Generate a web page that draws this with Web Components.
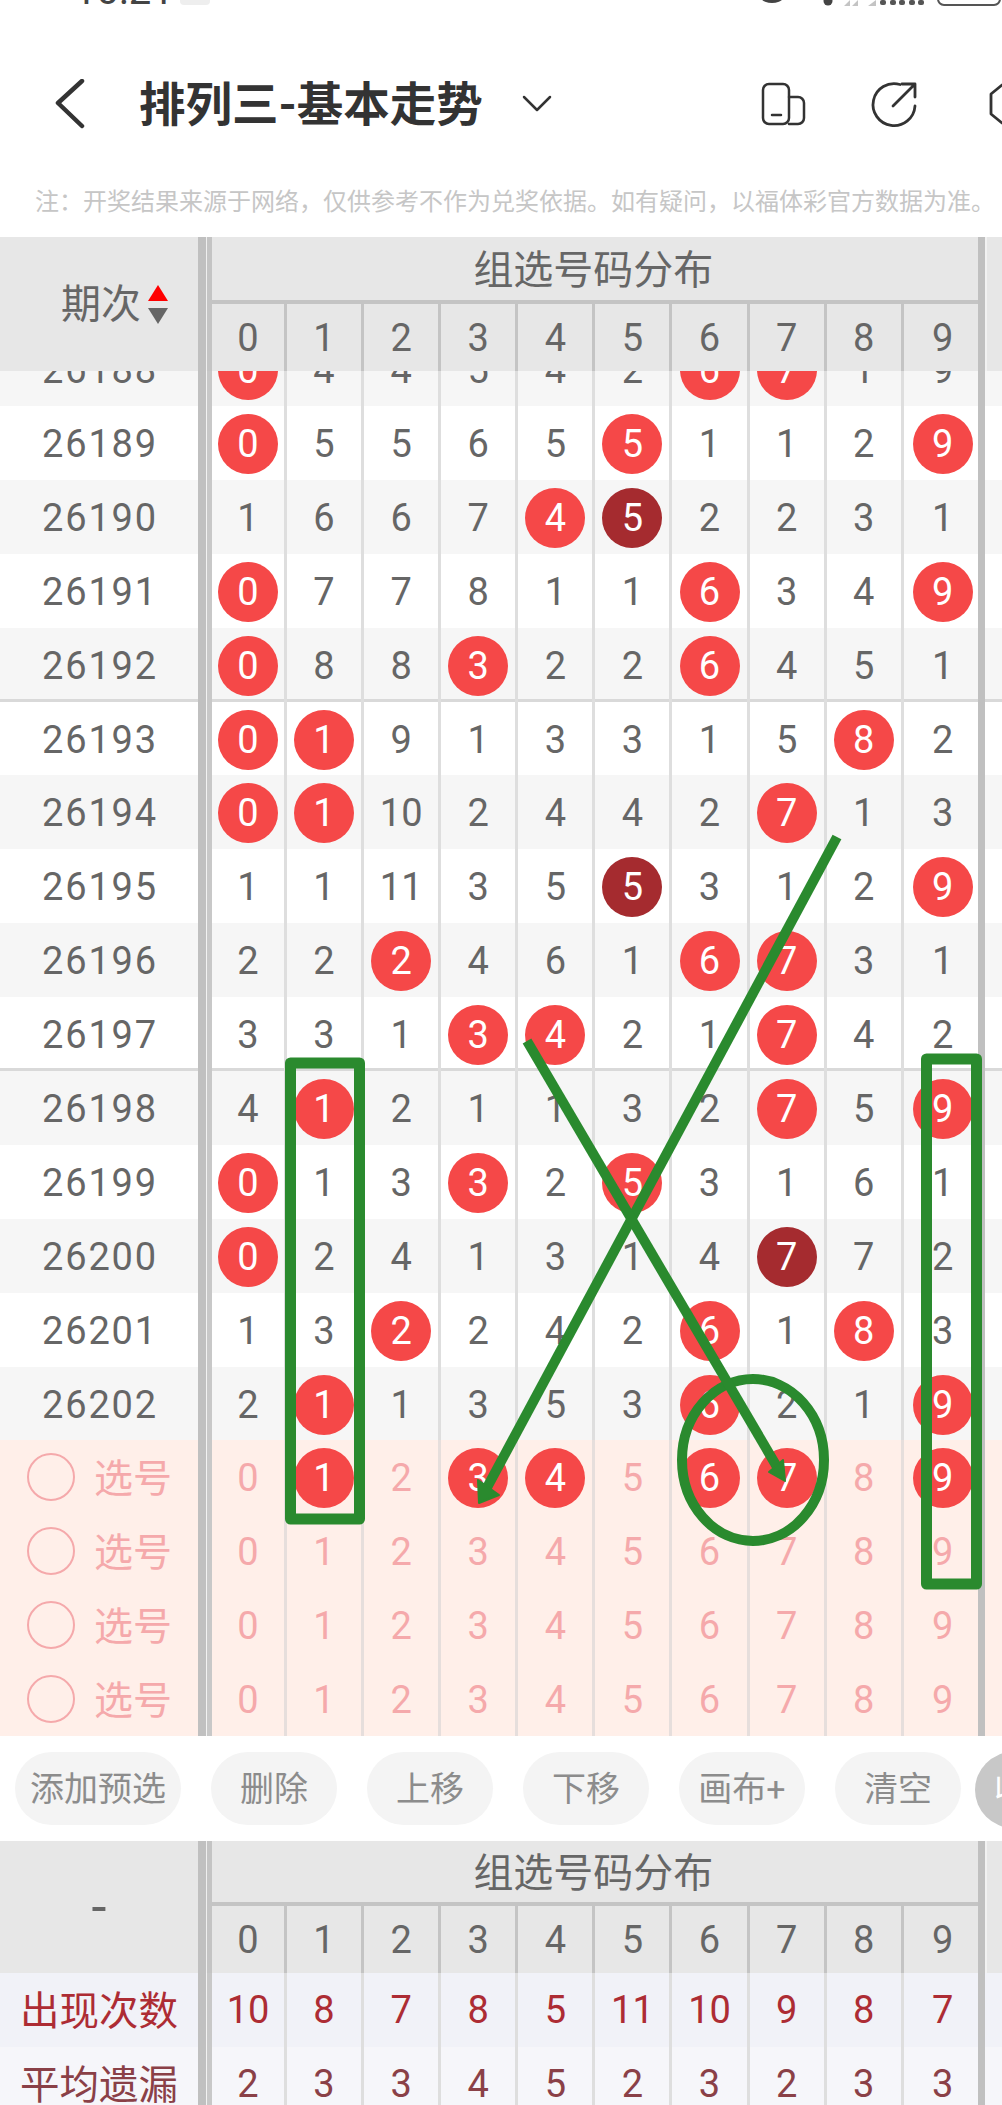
<!DOCTYPE html>
<html lang="zh">
<head>
<meta charset="utf-8">
<title>排列三-基本走势</title>
<style>
  html, body { margin: 0; padding: 0; background: #fff; }
  body {
    position: relative;
    width: 1002px;
    height: 2105px;
    overflow: hidden;
    font-family: Roboto, "Noto Sans CJK SC", sans-serif;
    color: #666;
    --cols: 198px 14px 75px repeat(8, 77.1px) 74px 7px 1fr;
  }
</style>
</head>
<body>
  <status-strip></status-strip>
  <title-bar>排列三-基本走势</title-bar>
  <notice-line>注：开奖结果来源于网络，仅供参考不作为兑奖依据。如有疑问，以福体彩官方数据为准。</notice-line>

  <trend-head group-h="67px">
    <sort-label slot="corner">期次</sort-label>
    组选号码分布
  </trend-head>

  <row-window>
    <draw-row alt values="0* 4 4 5 4 2 6* 7* 1 9">26188</draw-row>
    <draw-row values="0* 5 5 6 5 5* 1 1 2 9*">26189</draw-row>
    <draw-row alt values="1 6 6 7 4* 5! 2 2 3 1">26190</draw-row>
    <draw-row values="0* 7 7 8 1 1 6* 3 4 9*">26191</draw-row>
    <draw-row alt sep values="0* 8 8 3* 2 2 6* 4 5 1">26192</draw-row>
    <draw-row values="0* 1* 9 1 3 3 1 5 8* 2">26193</draw-row>
    <draw-row alt values="0* 1* 10 2 4 4 2 7* 1 3">26194</draw-row>
    <draw-row values="1 1 11 3 5 5! 3 1 2 9*">26195</draw-row>
    <draw-row alt values="2 2 2* 4 6 1 6* 7* 3 1">26196</draw-row>
    <draw-row sep values="3 3 1 3* 4* 2 1 7* 4 2">26197</draw-row>
    <draw-row alt values="4 1* 2 1 1 3 2 7* 5 9*">26198</draw-row>
    <draw-row values="0* 1 3 3* 2 5* 3 1 6 1">26199</draw-row>
    <draw-row alt values="0* 2 4 1 3 1 4 7! 7 2">26200</draw-row>
    <draw-row values="1 3 2* 2 4 2 6* 1 8* 3">26201</draw-row>
    <draw-row alt values="2 1* 1 3 5 3 6* 2 1 9*">26202</draw-row>
    <draw-row pick values="0 1* 2 3* 4* 5 6* 7* 8 9*"><pick-label>选号</pick-label></draw-row>
    <draw-row pick values="0 1 2 3 4 5 6 7 8 9"><pick-label>选号</pick-label></draw-row>
    <draw-row pick values="0 1 2 3 4 5 6 7 8 9"><pick-label>选号</pick-label></draw-row>
    <draw-row pick values="0 1 2 3 4 5 6 7 8 9"><pick-label>选号</pick-label></draw-row>
  </row-window>

  <tool-bar>
    <tool-chip>添加预选</tool-chip>
    <tool-chip>删除</tool-chip>
    <tool-chip>上移</tool-chip>
    <tool-chip>下移</tool-chip>
    <tool-chip>画布+</tool-chip>
    <tool-chip>清空</tool-chip>
    <tool-chip dark>收起</tool-chip>
  </tool-bar>

  <trend-head group-h="65px">
    <span slot="corner" style="font-size:54px;line-height:54px">-</span>
    组选号码分布
  </trend-head>
  <draw-row stat style="--ink:#ad2c34; --row-bg:#f1f2f8" values="10 8 7 8 5 11 10 9 8 7">出现次数</draw-row>
  <draw-row stat style="--ink:#8a4047; --row-bg:#f6f6fa" values="2 3 3 4 5 2 3 2 3 3">平均遗漏</draw-row>

  <ink-layer></ink-layer>

<script>
class StatusStrip extends HTMLElement {
  constructor() {
    super();
    this.attachShadow({ mode: "open" });
    this.shadowRoot.innerHTML = `
      <style>
        :host { display: flex; height: 44px; overflow: hidden; align-items: flex-start; }
        .time { margin: -29px 0 0 74px; font-size: 40px; line-height: 40px; color: #444; width: 106px; }
        .pill { width: 30px; height: 5px; background: #eee; border-radius: 0 0 4px 4px; }
        svg { margin-left: auto; }
      </style>
      <span class="time">10:21</span>
      <span class="pill"></span>
      <svg width="242" height="10" viewBox="0 0 242 10">
        <circle cx="12" cy="-15" r="18" fill="#444"/>
        <circle cx="68" cy="1" r="4.5" fill="#444"/>
        <path d="M84 6 L90 0 V6Z M92 6 L98 0 V6Z M108 6 L116 0 V6Z" fill="#c4c4c4"/>
        <g fill="#555">
          <rect x="120" y="0" width="6" height="5" rx="2"/>
          <rect x="130" y="0" width="6" height="5" rx="2"/>
          <rect x="139" y="0" width="6" height="5" rx="2"/>
          <rect x="149" y="0" width="6" height="5" rx="2"/>
          <rect x="158" y="0" width="6" height="5" rx="2"/>
        </g>
        <rect x="178" y="-20" width="62" height="25" rx="6" fill="none" stroke="#555" stroke-width="2"/>
      </svg>
    `;
  }
}

class TitleBar extends HTMLElement {
  constructor() {
    super();
    this.attachShadow({ mode: "open" });
    this.shadowRoot.innerHTML = `
      <style>
        :host { display: flex; align-items: center; height: 120px; overflow: hidden; color: #333; }
        .back { margin-left: 55px; flex: none; }
        .title { margin: -7px 0 0 54px; font-size: 46.5px; font-weight: 700; white-space: nowrap; width: 343px; }
        .down { margin-left: 40px; flex: none; }
        .tools { margin-left: auto; width: 242px; display: flex; flex: none; gap: 62px; }
        .tools svg { flex: none; }
        .tools svg:last-child { margin-left: 8px; }
        svg * { fill: none; stroke: #333; stroke-linecap: round; stroke-linejoin: round; }
      </style>
      <svg class="back" width="30" height="50" viewBox="0 0 30 50"><path d="M27 2 L3 24 L27 47" stroke-width="4.5"/></svg>
      <div class="title"><slot></slot></div>
      <svg class="down" width="30" height="20" viewBox="0 0 30 20"><path d="M2 3 L15 16 L28 3" stroke-width="2.5"/></svg>
      <div class="tools">
        <svg width="48" height="50" viewBox="0 0 48 50">
          <rect x="3" y="5" width="26" height="40" rx="6" stroke-width="2.5"/>
          <path d="M29 18 h9 a6 6 0 0 1 6 6 v15 a6 6 0 0 1 -6 6 h-9" stroke-width="2.5"/>
          <path d="M12 36 h9" stroke-width="2.5"/>
        </svg>
        <svg width="48" height="50" viewBox="0 0 48 50">
          <path d="M30 5.5 A21 21 0 1 0 45 27" stroke-width="2.8"/>
          <path d="M23 27 L45 5 M32 5 H45 V18" stroke-width="2.8"/>
        </svg>
        <svg width="14" height="50" viewBox="0 0 14 50"><path d="M14 6 L3 15 V35 L14 44" stroke-width="2.8"/></svg>
      </div>
    `;
  }
}

class NoticeLine extends HTMLElement {
  constructor() {
    super();
    this.attachShadow({ mode: "open" });
    this.shadowRoot.innerHTML = `
      <style>
        :host { display: block; height: 70px; padding: 3px 0 0 35px; box-sizing: content-box; line-height: 70px;
                font-size: 24px; color: #c6c6c6; white-space: nowrap; overflow: hidden; }
      </style>
      <slot></slot>
    `;
  }
}

class SortLabel extends HTMLElement {
  constructor() {
    super();
    this.attachShadow({ mode: "open" });
    this.shadowRoot.innerHTML = `
      <style>
        :host { display: flex; align-items: center; gap: 7px; margin-left: 61px; font-size: 40px; }
        .txt { margin-top: -7px; }
        .arrows { display: flex; flex-direction: column; gap: 7px; }
        .up, .dn { width: 0; height: 0; border-left: 10px solid transparent; border-right: 10px solid transparent; }
        .up { border-bottom: 16px solid #f00; }
        .dn { border-top: 16px solid #666; }
      </style>
      <span class="txt"><slot></slot></span>
      <div class="arrows"><div class="up"></div><div class="dn"></div></div>
    `;
  }
}

class TrendHead extends HTMLElement {
  connectedCallback() {
    if (this.shadowRoot) return;
    this.attachShadow({ mode: "open" });
    const digits = [...Array(10).keys()]
      .map((n) => `<div class="num${n === 9 ? " last" : ""}">${n}</div>`)
      .join("");
    this.shadowRoot.innerHTML = `
      <style>
        :host {
          display: grid;
          grid-template-columns: var(--cols);
          grid-template-rows: ${this.getAttribute("group-h")} 67px;
          background: #e7e7e7;
          color: #666;
          font-size: 38px;
        }
        .corner { grid-row: 1 / 3; grid-column: 1; display: flex; align-items: center; justify-content: center; }
        .corner.left { justify-content: flex-start; }
        .gutter { grid-row: 1 / 3; grid-column: 2; background: linear-gradient(to right, #c0c0c0 0 8px, #efefef 8px 9px, #c4c4c4 9px 14px); }
        .group { grid-row: 1; grid-column: 3 / span 10; display: flex; align-items: center; justify-content: center;
                 font-size: 40px; border-bottom: 4px solid #c4c4c4; box-sizing: border-box; padding: 0 3px 3px 0; }
        .bar { grid-row: 1 / 3; grid-column: 13; background: #c0c0c0; }
        .tail { grid-row: 1 / 3; grid-column: 14; border-left: 2px solid #f2f2f2; }
        .num { grid-row: 2; display: flex; align-items: center; justify-content: center; border-right: 3px solid #c4c4c4; }
        .num.last { border-right: 0; padding-left: 4px; }
      </style>
      <div class="corner"><slot name="corner"></slot></div>
      <div class="gutter"></div>
      <div class="group"><slot></slot></div>
      <div class="bar"></div>
      <div class="tail"></div>
      ${digits}
    `;
    this.shadowRoot.querySelectorAll(".num").forEach((cell, i) => {
      cell.style.gridColumn = String(i + 3);
    });
    if (this.querySelector("sort-label")) {
      this.shadowRoot.querySelector(".corner").classList.add("left");
    }
  }
}

class RowWindow extends HTMLElement {
  constructor() {
    super();
    this.attachShadow({ mode: "open" });
    // the list is scrolled: the top row is half hidden under the sticky head
    this.shadowRoot.innerHTML = `
      <style>
        :host { display: block; height: 1365px; overflow: hidden; }
        .list { margin-top: -38.9px; }
      </style>
      <div class="list"><slot></slot></div>
    `;
  }
}

class DrawRow extends HTMLElement {
  connectedCallback() {
    if (this.shadowRoot) return;
    this.attachShadow({ mode: "open" });
    const cells = this.getAttribute("values").split(" ").map((v, i) => {
      const kind = v.endsWith("*") ? "ball" : v.endsWith("!") ? "ball dark" : "";
      const txt = v.replace(/[*!]/, "");
      const inner = kind ? `<span class="${kind}">${txt}</span>` : txt;
      return `<div class="cell${i === 9 ? " last" : ""}">${inner}</div>`;
    }).join("");
    this.shadowRoot.innerHTML = `
      <style>
        :host {
          display: grid;
          grid-template-columns: var(--cols);
          height: 73.9px;
          background: var(--row-bg, #fff);
          color: var(--ink, #666);
          font-size: 38px;
        }
        :host([alt]) { background: #f6f6f6; }
        :host([sep]) { box-shadow: inset 0 -3px #d9d9d9; }
        :host([pick]) { background: #ffefe9; color: #f5a9ab; --line: #e6dedc; }
        .label { display: flex; align-items: center; justify-content: center; letter-spacing: 1.8px; white-space: nowrap; padding: 2px 0 0 2px; }
        :host([pick]) .label { letter-spacing: 0; font-size: 39px; padding: 0; }
        :host([stat]) .label { letter-spacing: 0; font-size: 39.5px; padding: 0 0 5px; }
        .gutter { background: linear-gradient(to right, #c0c0c0 0 8px, #f2f2f2 8px 9px, #c8c8c8 9px 14px); }
        .cell { display: flex; align-items: center; justify-content: center; border-right: 3px solid var(--line, #dedede); padding-top: 2px; box-sizing: border-box; }
        :host([stat]) .cell { padding-top: 0; }
        .cell.last { border-right: 0; padding-left: 4px; }
        .bar { background: #c0c0c0; }
        .ball { display: flex; align-items: center; justify-content: center; width: 60px; height: 60px; border-radius: 50%;
                background: #f54848; color: #fff; flex: none; }
        .ball.dark { background: #a52b2f; }
      </style>
      <div class="label"><slot></slot></div>
      <div class="gutter"></div>
      ${cells}
      <div class="bar"></div>
      <div class="tail"></div>
    `;
  }
}

class PickLabel extends HTMLElement {
  constructor() {
    super();
    this.attachShadow({ mode: "open" });
    this.shadowRoot.innerHTML = `
      <style>
        :host { display: flex; align-items: center; gap: 19px; width: 147px; margin-left: 3px; }
        .ring { width: 48px; height: 48px; box-sizing: border-box; border: 2.5px solid #f5a9ab; border-radius: 50%; flex: none; }
        .txt { margin-top: -5px; }
      </style>
      <div class="ring"></div><span class="txt"><slot></slot></span>
    `;
  }
}

class ToolBar extends HTMLElement {
  constructor() {
    super();
    this.attachShadow({ mode: "open" });
    this.shadowRoot.innerHTML = `
      <style>
        :host { display: flex; gap: 30px; height: 105px; box-sizing: border-box; padding: 16px 0 0 15px; overflow: hidden; background: #fff; }
      </style>
      <slot></slot>
    `;
  }
}

class ToolChip extends HTMLElement {
  constructor() {
    super();
    this.attachShadow({ mode: "open" });
    this.shadowRoot.innerHTML = `
      <style>
        :host { display: flex; flex: none; align-items: center; justify-content: center; box-sizing: border-box;
                min-width: 126px; height: 73px; padding: 0 15px 5px; border-radius: 37px; background: #f4f4f4;
                color: #8c8c8c; font-size: 34px; white-space: nowrap; }
        :host([dark]) { background: #c8c8c8; color: #fff; height: 76px; border-radius: 38px; margin-left: -16px;
                        padding-left: 19px; justify-content: flex-start; }
      </style>
      <slot></slot>
    `;
  }
}

class InkLayer extends HTMLElement {
  constructor() {
    super();
    this.attachShadow({ mode: "open" });
    // hand drawn marks on top of the chart, so these stay at canvas coordinates
    this.shadowRoot.innerHTML = `
      <style>
        :host { position: absolute; left: 0; top: 0; width: 1002px; height: 2105px; pointer-events: none; }
        svg { display: block; }
      </style>
      <svg width="1002" height="2105" viewBox="0 0 1002 2105" fill="none" stroke="#2a8a2e" stroke-width="11" stroke-linejoin="round">
        <rect x="290.5" y="1063" width="69" height="456"/>
        <rect x="926.5" y="1059" width="50" height="525"/>
        <ellipse cx="753" cy="1460" rx="71" ry="81" stroke-width="10"/>
        <path d="M837 837 L483 1495" stroke-width="10"/>
        <path d="M479 1503 L478 1480 L499 1495 Z" fill="#2a8a2e" stroke-width="2"/>
        <path d="M527 1041 L780 1472" stroke-width="10"/>
        <path d="M785 1481 L769 1472 L783 1460 Z" fill="#2a8a2e" stroke-width="2"/>
      </svg>
    `;
  }
}

customElements.define("status-strip", StatusStrip);
customElements.define("title-bar", TitleBar);
customElements.define("notice-line", NoticeLine);
customElements.define("sort-label", SortLabel);
customElements.define("trend-head", TrendHead);
customElements.define("row-window", RowWindow);
customElements.define("draw-row", DrawRow);
customElements.define("pick-label", PickLabel);
customElements.define("tool-bar", ToolBar);
customElements.define("tool-chip", ToolChip);
customElements.define("ink-layer", InkLayer);
</script>
</body>
</html>
